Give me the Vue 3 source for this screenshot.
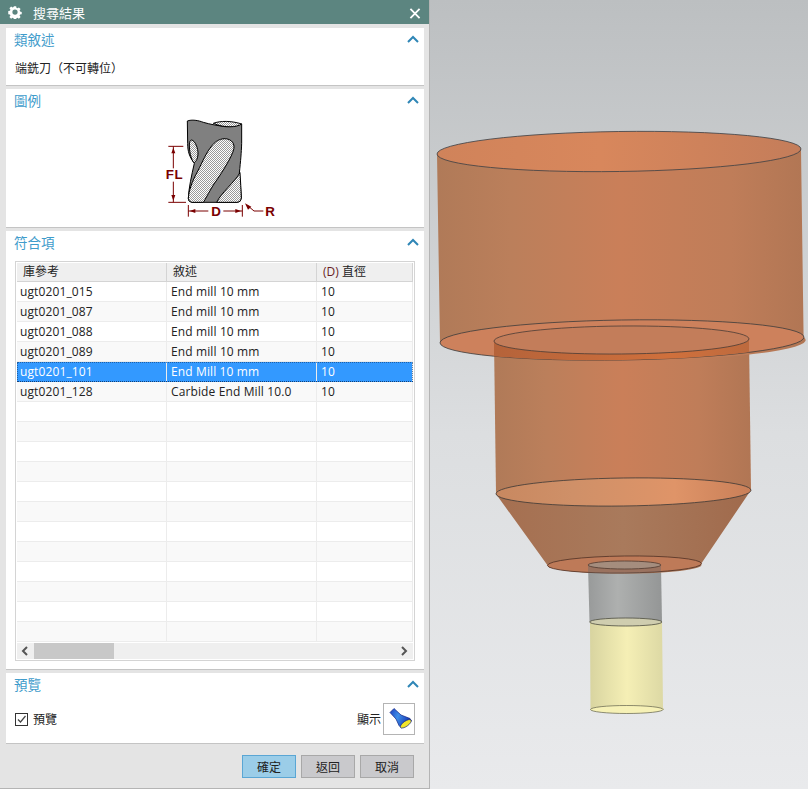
<script setup>
const hits = [
  { ref: 'ugt0201_015', desc: 'End mill 10 mm', dia: '10' },
  { ref: 'ugt0201_087', desc: 'End mill 10 mm', dia: '10' },
  { ref: 'ugt0201_088', desc: 'End mill 10 mm', dia: '10' },
  { ref: 'ugt0201_089', desc: 'End mill 10 mm', dia: '10' },
  { ref: 'ugt0201_101', desc: 'End Mill 10 mm', dia: '10', selected: true },
  { ref: 'ugt0201_128', desc: 'Carbide End Mill 10.0', dia: '10' }
]

// the grid always shows 18 rows, the rest stay empty
const rows = [...hits, ...Array.from({ length: 12 }, () => ({ ref: '', desc: '', dia: '' }))]
</script>

<template>
  <div class="screen">
    <div class="dialog">
      <div class="titlebar">
        <svg class="gear" viewBox="0 0 16 16">
          <path d="M6.6 1h2.8l.3 2 1.3.6 1.7-1.1 2 2-1.1 1.7.5 1.3 2 .4v2.8l-2 .3-.6 1.3 1.2 1.7-2 2-1.7-1.2-1.3.6-.3 2H6.6l-.3-2-1.3-.6-1.7 1.2-2-2 1.2-1.7-.6-1.3-2-.3V6.9l2-.4.6-1.3-1.2-1.7 2-2 1.7 1.1 1.3-.6z" transform="translate(.4 .4) scale(.95)" fill="#fff" />
          <circle cx="8" cy="8" r="3" fill="#5c8580" />
        </svg>
        <span class="title">搜尋結果</span>
        <svg class="close" viewBox="0 0 12 12">
          <path d="M1 1l10 10M11 1L1 11" stroke="#fff" stroke-width="2" fill="none" />
        </svg>
      </div>

      <div class="body">
        <section class="panel panel-type">
          <div class="panel-head">
            <span>類敘述</span>
            <svg class="chevron" viewBox="0 0 12 8"><path d="M1 7l5-5 5 5" /></svg>
          </div>
          <div class="type-text">端銑刀（不可轉位）</div>
        </section>

        <section class="panel panel-legend">
          <div class="panel-head">
            <span>圖例</span>
            <svg class="chevron" viewBox="0 0 12 8"><path d="M1 7l5-5 5 5" /></svg>
          </div>
          <svg class="legend" viewBox="0 0 420 330">
            <defs>
              <pattern id="hatch" width="6" height="6" patternUnits="userSpaceOnUse">
                <rect width="6" height="6" fill="#fff" />
                <rect width="3" height="3" fill="#999" />
                <rect x="3" y="3" width="3" height="3" fill="#999" />
              </pattern>
            </defs>
            <path class="tool" fill="#808080" d="M112 33C125 28 145 31 160 37C180 43 205 47 225 50C245 50 262 48 275 42L275 100C274 130 272 150 268 190C270 215 273 240 274 265Q272 277 262 277L125 277Q115 275 115 265C116 235 125 195 133 160C118 140 113 125 113 100Z" />
            <path class="tool" fill="url(#hatch)" d="M190 40C210 32 245 32 275 42C260 52 225 55 190 40Z" />
            <path class="tool" fill="url(#hatch)" d="M212 88C230 82 250 90 252 108C255 125 225 175 190 225C175 250 165 270 160 277L125 277Q115 275 115 265C116 245 125 215 145 180C155 160 170 125 185 108C195 95 205 90 212 88Z" />
            <path class="tool" fill="url(#hatch)" d="M125 90C135 92 145 115 144 132C143 150 135 158 131 158C122 145 118 125 118 105C118 95 121 90 125 90Z" />
            <path class="tool" fill="url(#hatch)" d="M200 277C212 250 255 215 270 188C272 215 273 240 274 265Q272 277 262 277Z" />
            <g class="dim">
              <path d="M55 109H100M55 277H108M70 109V175M70 215V277M115 285V320M277 285V320M115 303H175M220 303H277M292 286L312 303H340" />
              <path class="arrow" d="M70 113L76 130H64ZM70 272L76 255H64ZM119 303L136 297V309ZM273 303L256 297V309ZM285 280L304 290L294 299Z" />
              <text x="47" y="207">FL</text>
              <text x="184" y="318">D</text>
              <text x="346" y="318">R</text>
            </g>
          </svg>
        </section>

        <section class="panel panel-hits">
          <div class="panel-head">
            <span>符合項</span>
            <svg class="chevron" viewBox="0 0 12 8"><path d="M1 7l5-5 5 5" /></svg>
          </div>
          <div class="grid">
            <div class="row head">
              <div class="cell">庫參考</div>
              <div class="cell">敘述</div>
              <div class="cell"><span class="dia-key">(D)</span> 直徑</div>
            </div>
            <div
              v-for="(row, i) in rows"
              :key="i"
              class="row"
              :class="{ odd: i % 2 === 1, selected: row.selected }"
            >
              <div class="cell">{{ row.ref }}</div>
              <div class="cell">{{ row.desc }}</div>
              <div class="cell">{{ row.dia }}</div>
            </div>
            <div class="scrollbar">
              <svg class="arrow-btn" viewBox="0 0 8 10"><path d="M6 1L2 5l4 4" /></svg>
              <div class="track"><div class="thumb"></div></div>
              <svg class="arrow-btn" viewBox="0 0 8 10"><path d="M2 1l4 4-4 4" /></svg>
            </div>
          </div>
        </section>

        <section class="panel panel-preview">
          <div class="panel-head">
            <span>預覽</span>
            <svg class="chevron" viewBox="0 0 12 8"><path d="M1 7l5-5 5 5" /></svg>
          </div>
          <div class="preview-row">
            <label class="check">
              <span class="box">
                <svg viewBox="0 0 11 11"><path d="M2 5.5l2.5 2.5 5-6" /></svg>
              </span>
              預覽
            </label>
            <span class="show-label">顯示</span>
            <div class="show-btn">
              <svg viewBox="0 0 30 30">
                <defs>
                  <linearGradient id="torch" x1="0" y1="0" x2="1" y2="0.4">
                    <stop offset="0" stop-color="#1c3fc0" />
                    <stop offset=".45" stop-color="#3f8fe8" />
                    <stop offset="1" stop-color="#1436b4" />
                  </linearGradient>
                </defs>
                <path d="M6 8.5L10 4.5L17 11L26 14.5L27.5 17L17.5 24L15 21.5L12 15Z" fill="url(#torch)" stroke="#0e1f80" stroke-width=".7" stroke-linejoin="round" />
                <ellipse cx="21.8" cy="19.8" rx="6.4" ry="2.6" transform="rotate(-35 21.8 19.8)" fill="#f2e62a" stroke="#0e1f80" stroke-width=".6" />
              </svg>
            </div>
          </div>
        </section>

        <div class="actions">
          <button class="btn primary">確定</button>
          <button class="btn">返回</button>
          <button class="btn">取消</button>
        </div>
      </div>
    </div>

    <svg class="viewport" viewBox="430 0 378 789">
      <defs>
        <linearGradient id="bg" x1="0" y1="0" x2="0" y2="1">
          <stop offset="0" stop-color="#bcbfc1" />
          <stop offset=".55" stop-color="#dcdee0" />
          <stop offset="1" stop-color="#e9eaec" />
        </linearGradient>
        <linearGradient id="copper" x1="0" y1="0" x2="1" y2="0">
          <stop offset="0" stop-color="#b07a58" />
          <stop offset=".2" stop-color="#bb7f5b" />
          <stop offset=".5" stop-color="#ca7f59" />
          <stop offset=".8" stop-color="#bf7d59" />
          <stop offset="1" stop-color="#b17654" />
        </linearGradient>
        <linearGradient id="copper-top" x1="0" y1="0" x2="1" y2="0">
          <stop offset="0" stop-color="#d0835a" />
          <stop offset=".45" stop-color="#d8875c" />
          <stop offset="1" stop-color="#c47d5a" />
        </linearGradient>
        <linearGradient id="copper-floor" x1="0" y1="0" x2="1" y2="0">
          <stop offset="0" stop-color="#c88860" />
          <stop offset=".3" stop-color="#cf9068" />
          <stop offset=".7" stop-color="#df9468" />
          <stop offset="1" stop-color="#c97f58" />
        </linearGradient>
        <linearGradient id="cone" x1="0" y1="0" x2="1" y2="0">
          <stop offset="0" stop-color="#a56f50" />
          <stop offset=".5" stop-color="#a97a5c" />
          <stop offset="1" stop-color="#a06a4c" />
        </linearGradient>
        <linearGradient id="rim" x1="0" y1="0" x2="1" y2="0">
          <stop offset="0" stop-color="#b5633a" />
          <stop offset=".7" stop-color="#d0703c" />
          <stop offset="1" stop-color="#bd6a3e" />
        </linearGradient>
        <linearGradient id="steel" x1="0" y1="0" x2="1" y2="0">
          <stop offset="0" stop-color="#989a9a" />
          <stop offset=".4" stop-color="#aeb0af" />
          <stop offset="1" stop-color="#949696" />
        </linearGradient>
        <linearGradient id="holder" x1="0" y1="0" x2="1" y2="0">
          <stop offset="0" stop-color="#d8d4a0" />
          <stop offset=".5" stop-color="#f5efb5" />
          <stop offset="1" stop-color="#dcd8a4" />
        </linearGradient>
        <clipPath id="big-floor">
          <ellipse cx="622" cy="340" rx="182" ry="20" transform="rotate(-.9 622 340)" />
        </clipPath>
        <clipPath id="cone-floor">
          <ellipse cx="624.5" cy="564.5" rx="77" ry="8.5" transform="rotate(-.7 624.5 564.5)" />
        </clipPath>
      </defs>
      <rect x="430" width="378" height="789" fill="url(#bg)" />

      <!-- yellow holder -->
      <path d="M590 622L590.5 710A36 4 0 0 0 663 708L662 622Z" fill="url(#holder)" />
      <ellipse cx="626.8" cy="709.5" rx="36.3" ry="4" fill="#f6f1b6" stroke="#60604a" stroke-width=".7" />
      <!-- grey shank -->
      <path d="M588 565L589.5 622L662 622L661 565Z" fill="url(#steel)" />
      <ellipse cx="625.8" cy="622" rx="36.2" ry="4" fill="#cfcdaf" stroke="#4c4c40" stroke-width=".8" />

      <!-- cone -->
      <path d="M496 494L548 566A77 8.5 0 0 0 701 564L751 490Z" fill="url(#cone)" />
      <ellipse cx="624.5" cy="564.5" rx="77" ry="8.5" transform="rotate(-.7 624.5 564.5)" fill="#be7a58" stroke="#503024" stroke-width=".8" />
      <rect x="588" y="565" width="73" height="10" fill="rgba(110, 105, 105, .45)" clip-path="url(#cone-floor)" />
      <ellipse cx="624.5" cy="565" rx="36.5" ry="4" fill="#a58d7e" stroke="#503a30" stroke-width=".8" />

      <!-- middle step -->
      <path d="M494 340L496 494L751 490L749 338Z" fill="url(#copper)" />
      <ellipse cx="623.5" cy="492" rx="127.5" ry="14" transform="rotate(-.8 623.5 492)" fill="url(#copper-floor)" stroke="#3c3836" stroke-width=".8" />

      <!-- big step -->
      <path d="M437 154L440 343A182 20 0 0 0 803.6 337L801 149Z" fill="url(#copper)" />
      <ellipse cx="622" cy="340" rx="182" ry="20" transform="rotate(-.9 622 340)" fill="#cd815c" stroke="#3c3c3c" stroke-width=".8" />
      <path d="M494 340L749 338V365H494Z" fill="url(#rim)" clip-path="url(#big-floor)" />
      <ellipse cx="621.5" cy="340" rx="127.5" ry="14" transform="rotate(-.5 621.5 340)" fill="#c37d5a" stroke="#4a3c36" stroke-width=".8" />
      <ellipse cx="619" cy="151.5" rx="182" ry="20" transform="rotate(-.8 619 151.5)" fill="url(#copper-top)" stroke="#3c3f44" stroke-width=".8" />
    </svg>
  </div>
</template>

<style scoped>
.screen {
  display: flex;
  width: 808px;
  height: 789px;
  overflow: hidden;
  font-family: "Open Sans", "Noto Sans CJK TC", sans-serif;
  font-size: 12px;
  color: #222;
}

.dialog {
  display: flex;
  flex-direction: column;
  flex: none;
  width: 430px;
  height: 789px;
  box-sizing: border-box;
  border-right: 1px solid #b4b4b4;
  border-bottom: 1px solid #b4b4b4;
  background: #e4e4e4;
}

.titlebar {
  display: flex;
  align-items: center;
  flex: none;
  height: 24px;
  padding: 0 8px 0 8px;
  background: #5c8580;
  color: #fff;
}

.gear {
  width: 14px;
  height: 14px;
}

.title {
  margin-left: 11px;
  font-size: 13px;
}

.close {
  width: 12px;
  height: 11px;
  margin: 2px 0 0 auto;
}

.body {
  display: flex;
  flex-direction: column;
  gap: 3px;
  padding: 4px 5px 0 6px;
}

.panel {
  box-sizing: border-box;
  background: #fff;
  border-bottom: 1px solid #c4c4c4;
}

.panel-head {
  display: flex;
  align-items: center;
  justify-content: space-between;
  height: 22px;
  margin-bottom: 2px;
  padding: 0 5px 0 8px;
  color: #3f9ccb;
  font-size: 13.5px;
}

.chevron {
  width: 12px;
  height: 8px;
}

.chevron path {
  fill: none;
  stroke: #2f86b6;
  stroke-width: 2;
}

.panel-type {
  height: 58px;
}

.type-text {
  padding: 8px 0 0 9px;
  line-height: 17px;
}

.panel-legend {
  height: 139px;
}

.legend {
  display: block;
  width: 140px;
  height: 110px;
  margin: -3px 0 0 144px;
}

.tool {
  stroke: #000;
  stroke-width: 3;
}

.dim path {
  fill: none;
  stroke: #7a0000;
  stroke-width: 3;
}

.dim .arrow {
  fill: #7a0000;
  stroke: none;
}

.dim text {
  fill: #7a0000;
  font-family: "Liberation Sans", sans-serif;
  font-weight: 700;
  font-size: 40px;
  letter-spacing: 2px;
}

.panel-hits {
  height: 439px;
}

.grid {
  box-sizing: border-box;
  width: 400px;
  height: 400px;
  margin: 8px 0 0 9px;
  padding: 1px;
  border: 1px solid #d4d4d4;
}

.row {
  display: grid;
  grid-template-columns: 150px 150px 1fr;
  height: 20px;
  box-sizing: border-box;
  border-bottom: 1px solid #ececec;
  background: #fff;
}

.row.odd {
  background: #f9f9f9;
}

.row.head {
  height: 19px;
  background: #efefef;
  border-bottom: 1px solid #d4d4d4;
}

.row.selected {
  background: #3399ff;
  color: #fff;
  border-bottom: 1px dotted #1a4a80;
  outline: 1px dotted rgba(20, 60, 110, .6);
  outline-offset: -1px;
}

.cell {
  box-sizing: border-box;
  padding-left: 4px;
  line-height: 19px;
  letter-spacing: .12px;
  border-right: 1px solid #ececec;
  white-space: nowrap;
  overflow: hidden;
}

.cell:first-child {
  padding-left: 3px;
}

.head .cell {
  padding-left: 6px;
  line-height: 18px;
  letter-spacing: 0;
  border-right-color: #d4d4d4;
}

.dia-key {
  color: #6a1f1f;
}

.scrollbar {
  display: flex;
  align-items: center;
  height: 16px;
  margin-top: 1px;
  background: #efefef;
}

.arrow-btn {
  flex: none;
  width: 8px;
  height: 10px;
  margin: 0 5px 0 4px;
}

.arrow-btn path {
  fill: none;
  stroke: #555;
  stroke-width: 2;
}

.track {
  flex: 1;
  height: 100%;
}

.thumb {
  width: 80px;
  height: 100%;
  background: #c8c8c8;
}

.panel-preview {
  height: 71px;
}

.preview-row {
  display: flex;
  align-items: center;
  padding: 6px 9px 0 9px;
}

.check {
  display: flex;
  align-items: center;
  gap: 5px;
  margin-right: auto;
}

.box {
  display: block;
  box-sizing: border-box;
  width: 13px;
  height: 13px;
  border: 1px solid #333;
}

.box svg {
  display: block;
}

.box path {
  fill: none;
  stroke: #444;
  stroke-width: 1.2;
}

.show-label {
  margin-right: 2px;
}

.show-btn {
  box-sizing: border-box;
  width: 32px;
  height: 32px;
  border: 1px solid #b4b4b4;
}

.show-btn svg {
  display: block;
  width: 30px;
  height: 30px;
}

.actions {
  display: flex;
  justify-content: flex-end;
  gap: 5px;
  padding: 8px 10px 0 0;
}

.btn {
  width: 54px;
  height: 23px;
  padding: 0;
  border: 1px solid #a8a8a8;
  background: #c9c9cc;
  color: #222;
  font: inherit;
}

.btn.primary {
  background: #9bcde8;
  border-color: #5aa6d4;
}

.viewport {
  display: block;
  flex: none;
  width: 378px;
  height: 789px;
}
</style>
